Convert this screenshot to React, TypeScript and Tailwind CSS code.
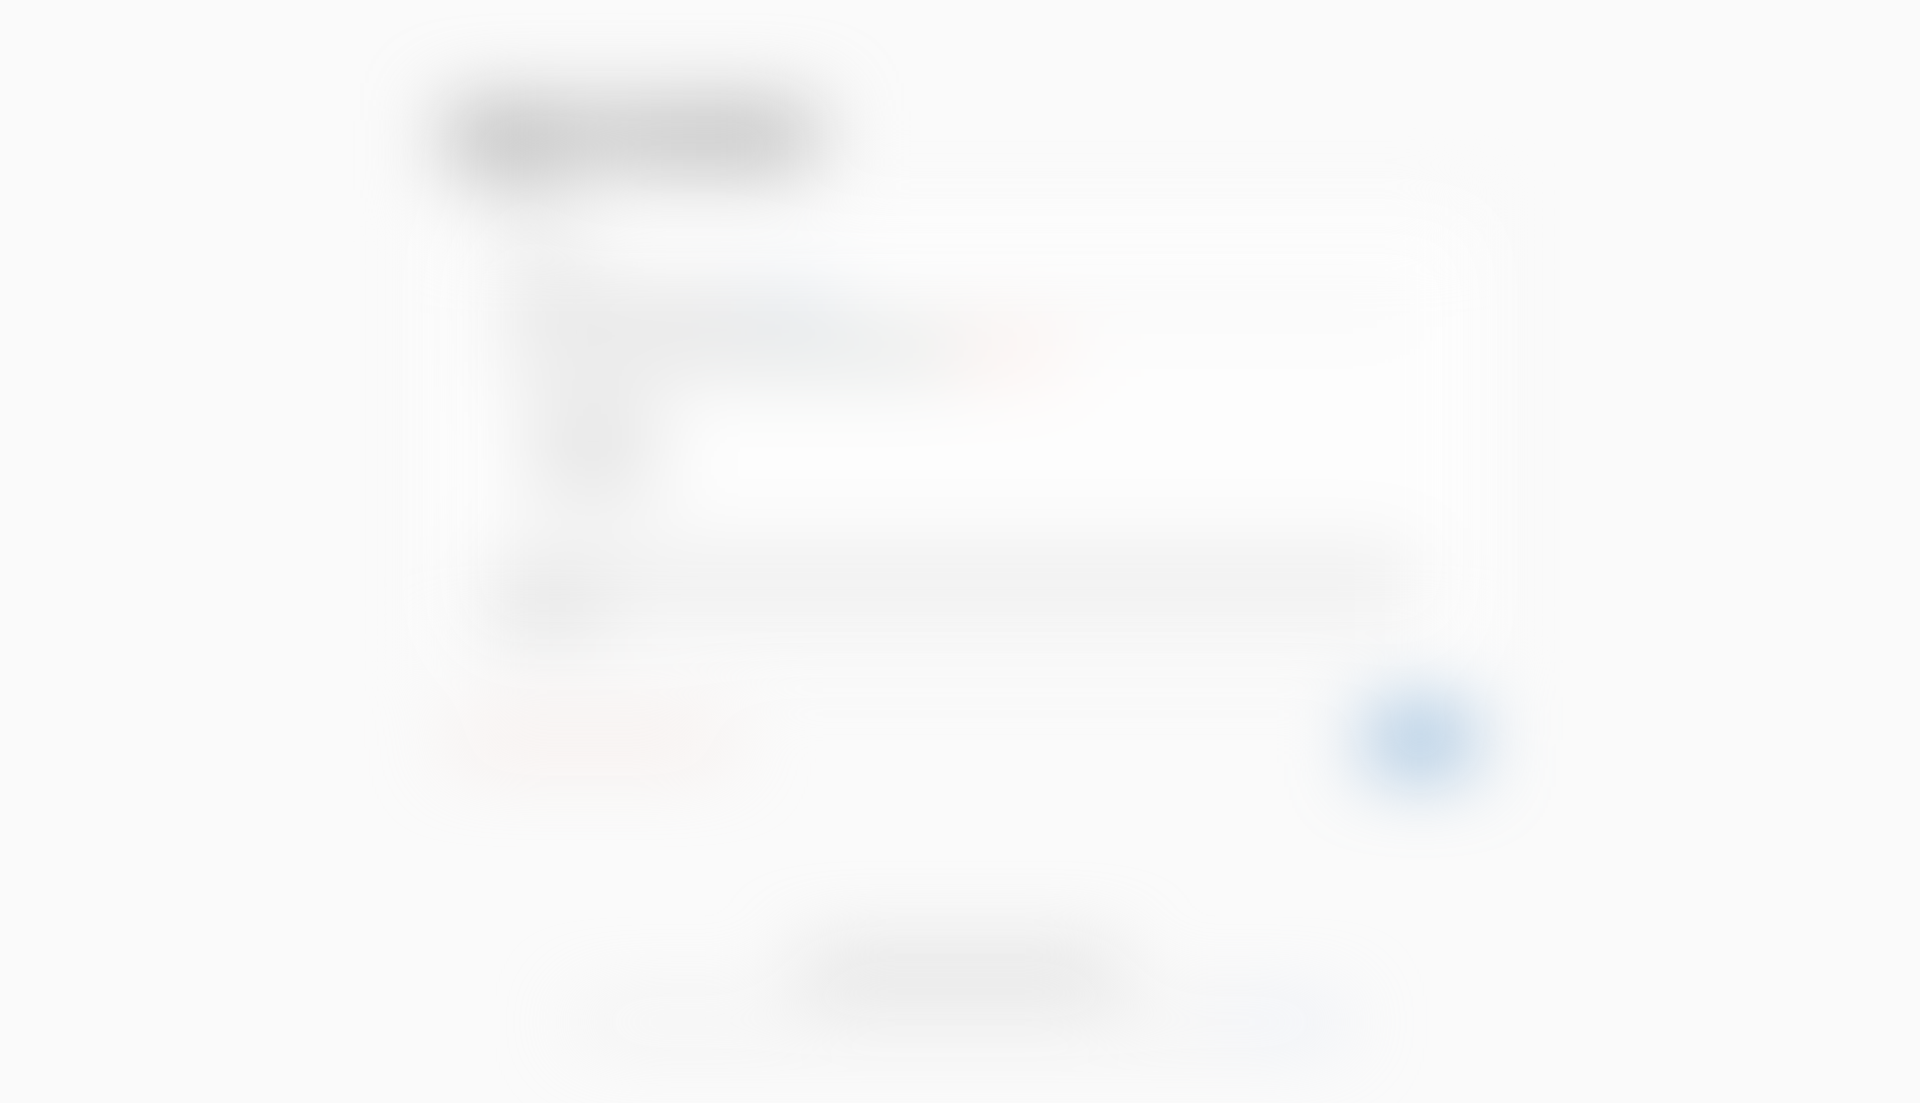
import React from 'react';

interface BarProps {
  className: string;
}

const Bar: React.FC<BarProps> = ({ className }) => (
  <span className={`block ${className}`} />
);

export default function App() {
  return (
    <div className="min-h-screen bg-[#fafafa] font-['Liberation_Sans',sans-serif] overflow-hidden">
      <div className="blur-[40px] max-w-[1040px] mx-auto pt-27 pb-8">
        {/* Title */}
        <header className="pl-2">
          <div className="flex">
            <Bar className="h-14 w-24 bg-[#acacac]" />
            <Bar className="h-14 w-28 bg-[#bcbcbc]" />
            <Bar className="h-14 w-40 bg-[#b2b2b2]" />
          </div>
          <Bar className="mt-4 ml-6 h-5 w-24 bg-[#dadada]" />
        </header>

        {/* Card */}
        <main className="mt-4 bg-[#fdfdfd] px-12 pt-6 pb-4">
          <div className="flex flex-col gap-8 px-4">
            <Bar className="h-5 w-20 bg-[#d0d0d0]" />
            <div className="flex items-center">
              <Bar className="h-5 w-60 bg-[#cecece]" />
              <Bar className="h-5 w-24 bg-[#c8d2de]" />
              <Bar className="h-5 flex-1 bg-[#f3f3f3]" />
            </div>
            <div className="flex items-center">
              <Bar className="h-5 w-60 bg-[#c8c8c8]" />
              <Bar className="h-5 w-52 bg-[#c4c9c7]" />
              <Bar className="h-5 w-28 bg-[#fadfd8]" />
            </div>
          </div>
          <div className="flex flex-col gap-8 mt-12 px-10">
            <Bar className="h-6 w-32 bg-[#c6c6c6]" />
            <Bar className="h-6 w-32 bg-[#cecece]" />
          </div>
          {/* Note */}
          <div className="mt-16 mr-4 bg-[#f4f4f4] pb-4">
            <div className="flex items-center">
              <Bar className="h-5 w-28 bg-[#d8d8d8]" />
              <Bar className="h-5 flex-1 bg-[#dfdfdf]" />
            </div>
            <Bar className="h-5 w-28 mt-8 bg-[#cccccc]" />
          </div>
        </main>

        {/* Actions */}
        <div className="mt-14 flex items-center justify-between px-3">
          <button type="button" aria-label="Cancel" className="h-6 w-[276px] bg-[#f4e4df]" />
          <button type="button" aria-label="Continue" className="h-12 w-24 bg-[#74a5d1]" />
        </div>

        {/* Footer */}
        <footer className="mt-48 flex flex-col items-center gap-7">
          <Bar className="h-7 w-[320px] bg-[#d0d0d0]" />
          <div className="flex">
            <Bar className="h-5 w-[656px] bg-[#ebebeb]" />
            <Bar className="h-5 w-28 bg-[#dde5f4]" />
          </div>
        </footer>
      </div>
    </div>
  );
}
